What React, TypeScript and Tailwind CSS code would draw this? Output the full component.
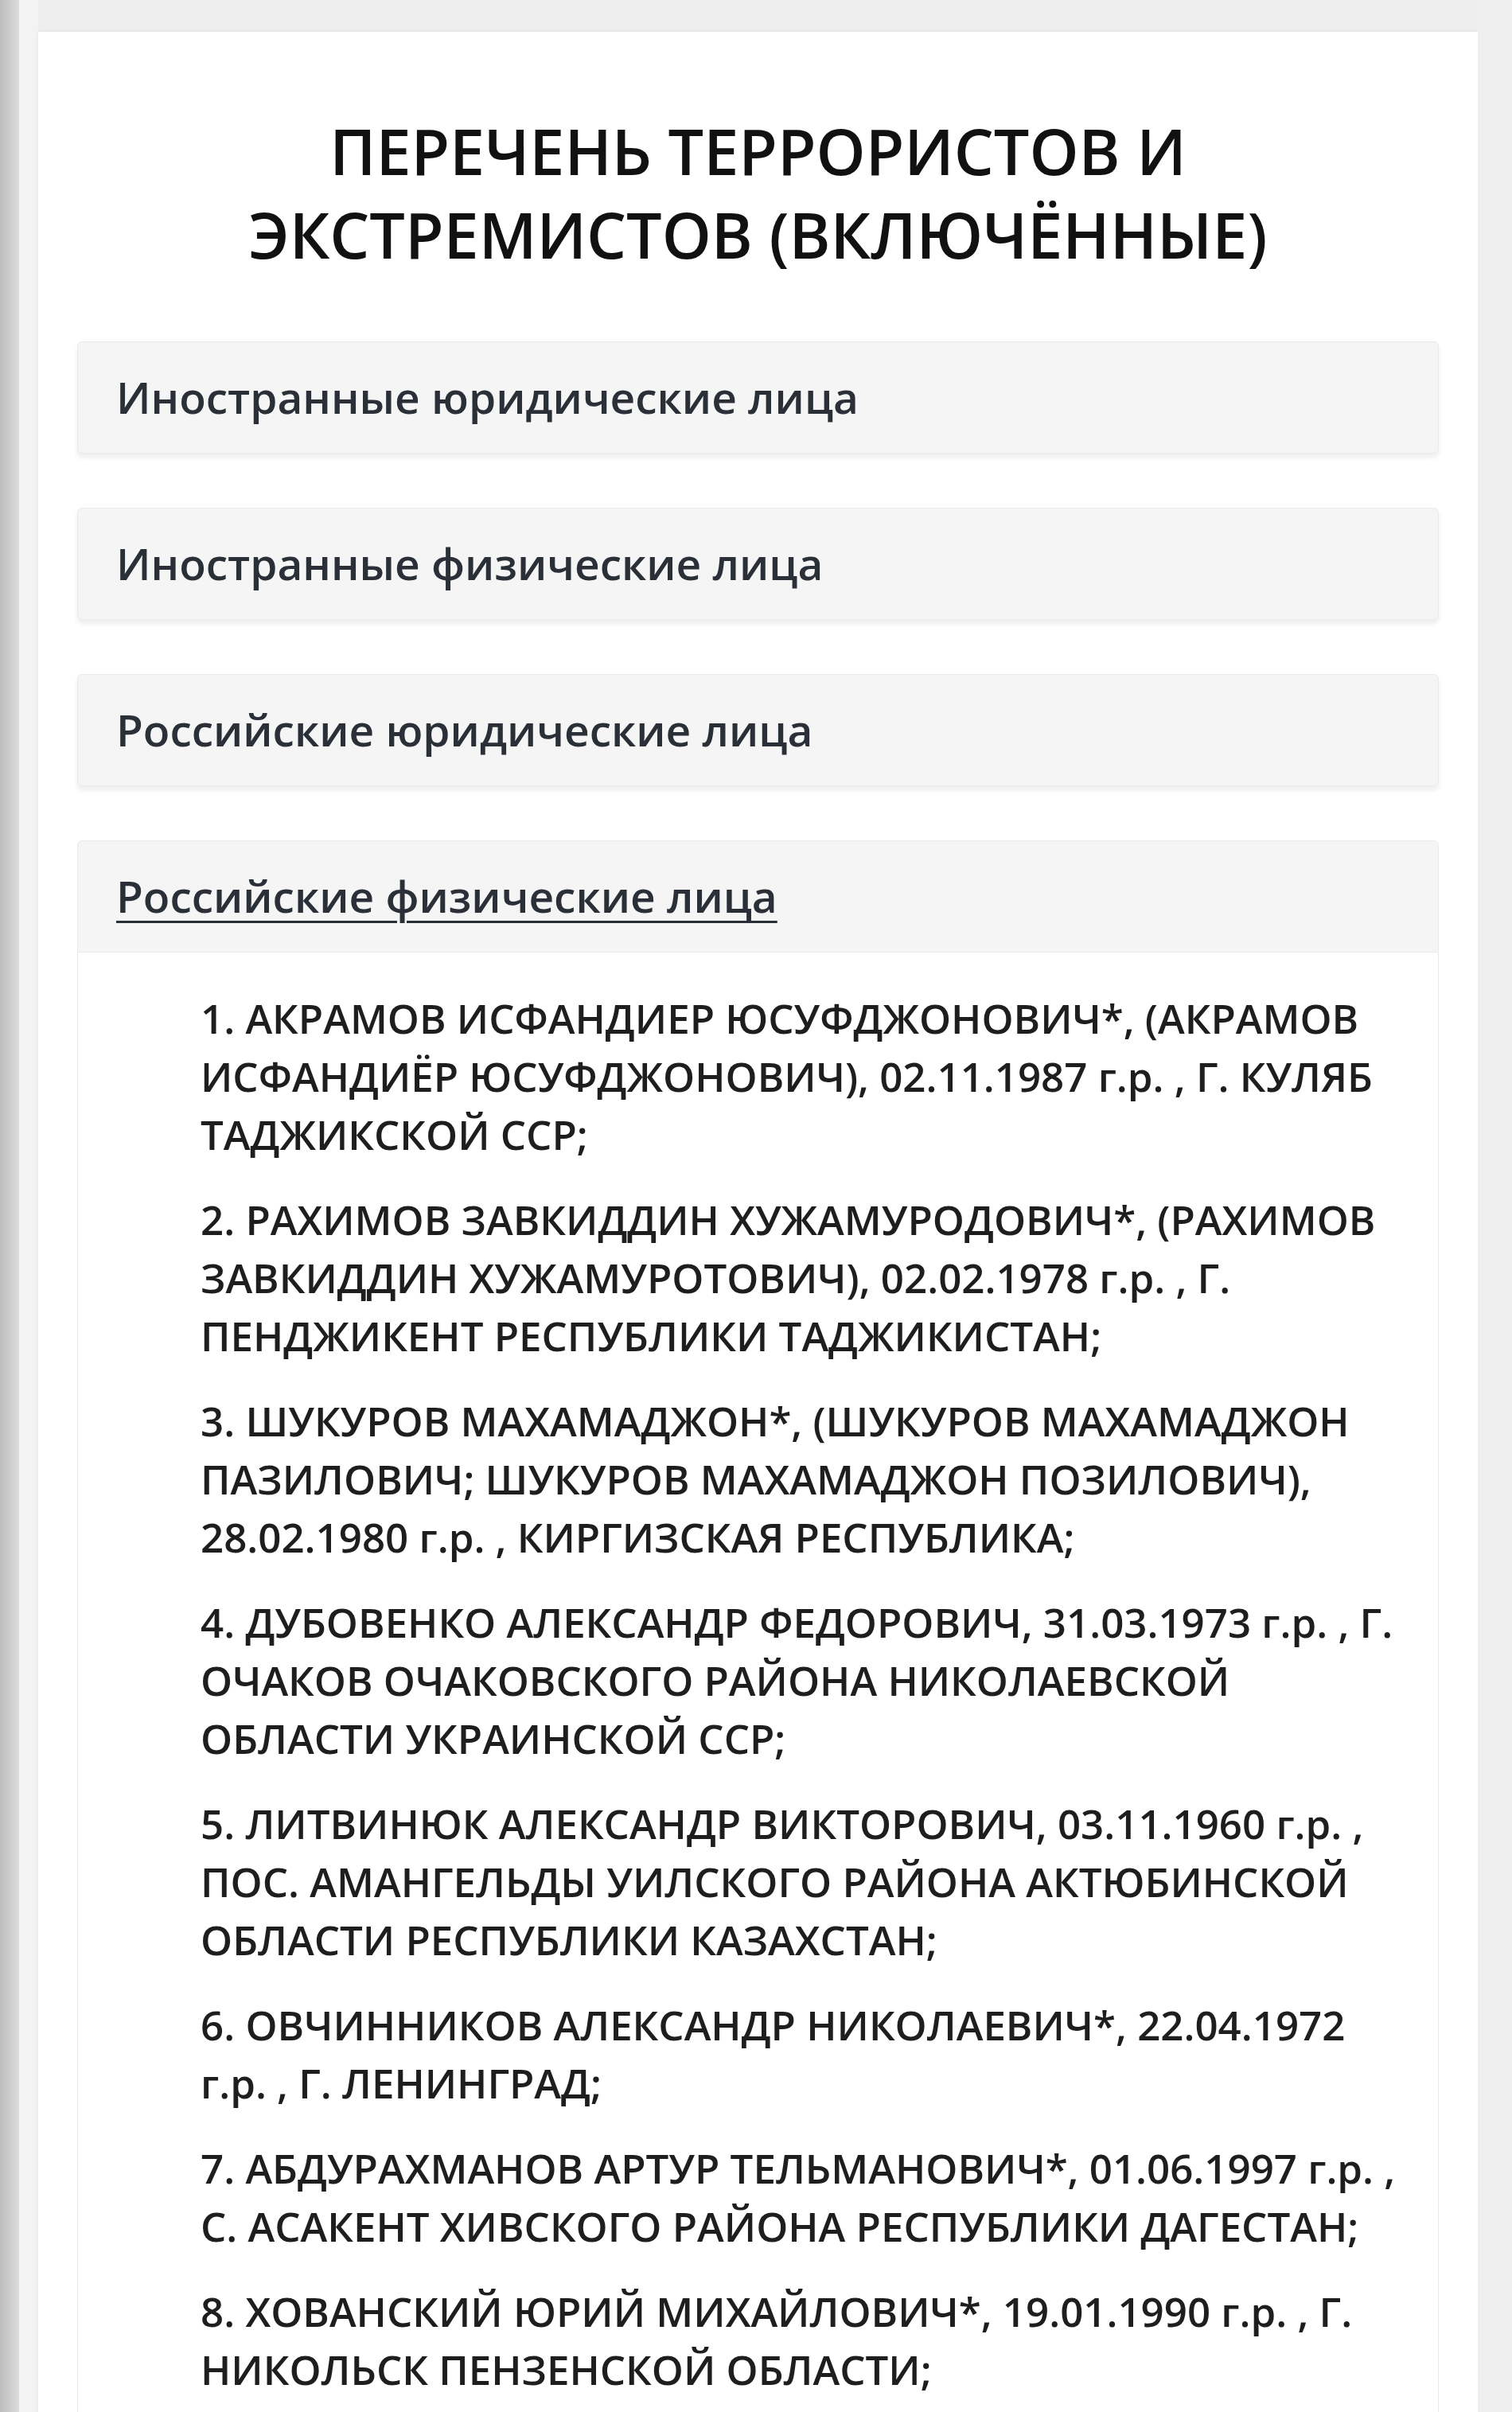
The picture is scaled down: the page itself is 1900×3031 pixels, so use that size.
import { useState } from "react";

const sections = [
  "Иностранные юридические лица",
  "Иностранные физические лица",
  "Российские юридические лица",
  "Российские физические лица",
];

const persons = [
  "АКРАМОВ ИСФАНДИЕР ЮСУФДЖОНОВИЧ*, (АКРАМОВ ИСФАНДИЁР ЮСУФДЖОНОВИЧ), 02.11.1987 г.р. , Г. КУЛЯБ ТАДЖИКСКОЙ ССР;",
  "РАХИМОВ ЗАВКИДДИН ХУЖАМУРОДОВИЧ*, (РАХИМОВ ЗАВКИДДИН ХУЖАМУРОТОВИЧ), 02.02.1978 г.р. , Г. ПЕНДЖИКЕНТ РЕСПУБЛИКИ ТАДЖИКИСТАН;",
  "ШУКУРОВ МАХАМАДЖОН*, (ШУКУРОВ МАХАМАДЖОН ПАЗИЛОВИЧ; ШУКУРОВ МАХАМАДЖОН ПОЗИЛОВИЧ), 28.02.1980 г.р. , КИРГИЗСКАЯ РЕСПУБЛИКА;",
  "ДУБОВЕНКО АЛЕКСАНДР ФЕДОРОВИЧ, 31.03.1973 г.р. , Г. ОЧАКОВ ОЧАКОВСКОГО РАЙОНА НИКОЛАЕВСКОЙ ОБЛАСТИ УКРАИНСКОЙ ССР;",
  "ЛИТВИНЮК АЛЕКСАНДР ВИКТОРОВИЧ, 03.11.1960 г.р. , ПОС. АМАНГЕЛЬДЫ УИЛСКОГО РАЙОНА АКТЮБИНСКОЙ ОБЛАСТИ РЕСПУБЛИКИ КАЗАХСТАН;",
  "ОВЧИННИКОВ АЛЕКСАНДР НИКОЛАЕВИЧ*, 22.04.1972 г.р. , Г. ЛЕНИНГРАД;",
  "АБДУРАХМАНОВ АРТУР ТЕЛЬМАНОВИЧ*, 01.06.1997 г.р. , С. АСАКЕНТ ХИВСКОГО РАЙОНА РЕСПУБЛИКИ ДАГЕСТАН;",
  "ХОВАНСКИЙ ЮРИЙ МИХАЙЛОВИЧ*, 19.01.1990 г.р. , Г. НИКОЛЬСК ПЕНЗЕНСКОЙ ОБЛАСТИ;",
];

export default function App() {
  const [open, setOpen] = useState(3);

  return (
    <div className="flex min-h-[3031px] bg-[#eeeeee] font-['Open_Sans',sans-serif]">
      <div className="w-[24px] shrink-0 bg-gradient-to-r from-[#bcbcbc] to-[#dddddd]" />
      <div className="w-[24px] shrink-0 bg-[#f3f3f3]" />

      <main className="flex flex-1 flex-col pt-[40px]">
        <div className="flex-1 bg-white px-[49px] pt-[97px] pb-[60px] shadow-[0_0_6px_rgba(0,0,0,0.06)]">
          <h1 className="mx-auto max-w-[1400px] text-center text-[79px] leading-[105px] font-semibold text-[#111111]">
            ПЕРЕЧЕНЬ ТЕРРОРИСТОВ И ЭКСТРЕМИСТОВ (ВКЛЮЧЁННЫЕ)
          </h1>

          <div className="mt-[82px] flex flex-col gap-[68px]">
            {sections.map((title, i) => (
              <div key={title}>
                <button
                  onClick={() => setOpen(open === i ? -1 : i)}
                  className={`flex h-[141px] w-full items-center rounded-t-[6px] border border-[#ebebeb] bg-[#f5f5f5] px-[48px] text-left text-[55px] font-semibold text-[#2b2f38] ${
                    open === i ? "" : "rounded-b-[6px] shadow-[0_5px_6px_rgba(0,0,0,0.07)]"
                  }`}
                >
                  <span className={open === i ? "underline decoration-[3px] underline-offset-[10px]" : ""}>
                    {title}
                  </span>
                </button>
                {open === i && (
                  <div className="border-x border-b border-[#e6e6e6] bg-white pt-[46px] pr-[35px] pl-[154px] pb-[40px]">
                    {persons.map((p, n) => (
                      <p
                        key={n}
                        className="mb-[34px] text-[51px] leading-[73px] font-semibold text-[#1e1e1e]"
                      >
                        {n + 1}. {p}
                      </p>
                    ))}
                  </div>
                )}
              </div>
            ))}
          </div>
        </div>
      </main>

      <div className="w-[43px] shrink-0 bg-[#efefef]" />
    </div>
  );
}
